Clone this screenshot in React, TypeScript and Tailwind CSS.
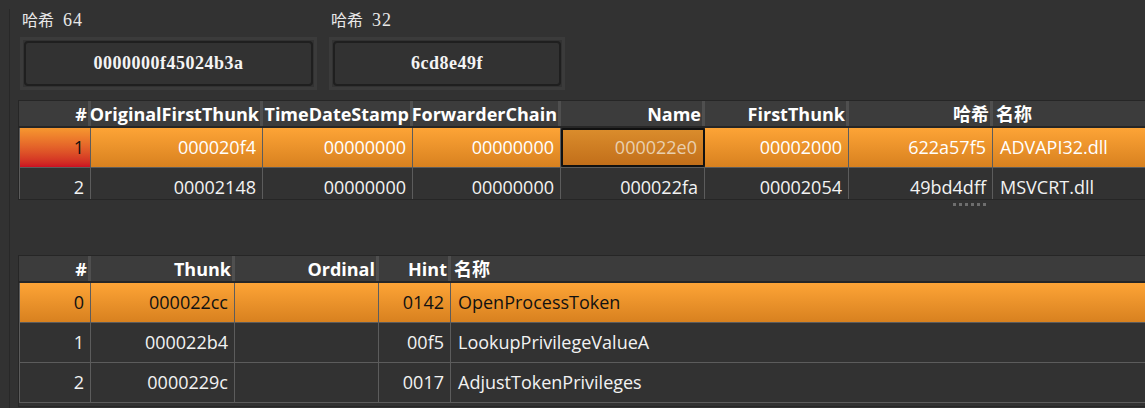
import React from "react";

type Col = { title: string; align: "right" | "left" };

const sans = "font-['Open_Sans','Noto_Sans_CJK_SC',sans-serif]";
const serif = "font-['Liberation_Serif','Noto_Sans_CJK_SC',serif]";

const importCols: Col[] = [
  { title: "#", align: "right" },
  { title: "OriginalFirstThunk", align: "right" },
  { title: "TimeDateStamp", align: "right" },
  { title: "ForwarderChain", align: "right" },
  { title: "Name", align: "right" },
  { title: "FirstThunk", align: "right" },
  { title: "哈希", align: "right" },
  { title: "名称", align: "left" },
];

const importRows = [
  ["1", "000020f4", "00000000", "00000000", "000022e0", "00002000", "622a57f5", "ADVAPI32.dll"],
  ["2", "00002148", "00000000", "00000000", "000022fa", "00002054", "49bd4dff", "MSVCRT.dll"],
];

const thunkCols: Col[] = [
  { title: "#", align: "right" },
  { title: "Thunk", align: "right" },
  { title: "Ordinal", align: "right" },
  { title: "Hint", align: "right" },
  { title: "名称", align: "left" },
];

const thunkRows = [
  ["0", "000022cc", "", "0142", "OpenProcessToken"],
  ["1", "000022b4", "", "00f5", "LookupPrivilegeValueA"],
  ["2", "0000229c", "", "0017", "AdjustTokenPrivileges"],
];

const HashBox = ({ label, bits, value, width }: { label: string; bits: string; value: string; width: string }) => (
  <div className="flex flex-col">
    <div className={`${serif} flex items-baseline text-[16px] leading-[20px] text-[#e8e8e8] pl-[2px] pt-[10px] h-[37px]`}>
      <span>{label}</span>
      <span className="ml-[9px] text-[18px] tracking-[1px]">{bits}</span>
    </div>
    <div className={`${width} h-[53px] border-[3px] border-[#3b3b3b] p-[1px]`}>
      <div className="h-full rounded-[4px] border-2 border-[#1f1f1f] flex items-center justify-center">
        <span className={`${serif} font-bold text-[18px] tracking-[0.5px] text-[#f4f4f4]`}>{value}</span>
      </div>
    </div>
  </div>
);

interface TableProps {
  cols: Col[];
  rows: string[][];
  template: string;
  bodyHeight: string;
  variant: "import" | "thunk";
}

const Table = ({ cols, rows, template, bodyHeight, variant }: TableProps) => {
  return (
    <div className={`border-l border-t border-b border-[#262626] ${sans}`}>
      {/* header */}
      <div className={`grid ${template} h-[27px] bg-[#3c3c3c] border-b-2 border-[#262626]`}>
        {cols.map((c, i) => (
          <div
            key={i}
            className={`flex items-center h-full text-[18px] font-bold text-white leading-none ${
              c.align === "right" ? "justify-end pr-[1px] border-r-[3px] border-[#4f4f4f]" : "justify-start pl-[3px]"
            }`}
          >
            {c.title}
          </div>
        ))}
      </div>
      {/* body */}
      <div className={`${bodyHeight} overflow-hidden`}>
        {rows.map((r, ri) => {
          const selected = ri === 0;
          return (
            <div key={ri} className={`grid ${template} h-[40px] border-b border-[#5c5c5c]`}>
              {r.map((v, ci) => {
                const col = cols[ci];
                let bg = "";
                let text = "text-[#f2f2f2]";
                if (selected) {
                  bg = "bg-gradient-to-b from-[#fda436] to-[#d8811f]";
                  text = variant === "thunk" ? "text-[#111]" : "text-white";
                  if (ci === 0) {
                    text = "text-[#111]";
                    if (variant === "import") bg = "bg-gradient-to-b from-[#f6972f] to-[#cc0f22]";
                  }
                }
                const focused = selected && variant === "import" && ci === 4;
                if (focused) {
                  bg = "bg-gradient-to-b from-[#da8c2c] to-[#c26f1a] border-2 border-[#111] rounded-[2px]";
                  text = "text-[#e9cfae]";
                }
                return (
                  <div
                    key={ci}
                    className={`flex items-center h-full text-[18px] whitespace-nowrap overflow-hidden ${bg} ${text} ${
                      ci === 0 ? "border-l border-[#5c5c5c]" : ""
                    } ${ci < cols.length - 1 && !focused ? "border-r border-[#5c5c5c]" : ""} ${
                      col.align === "right" ? "justify-end pr-[6px]" : "justify-start pl-[7px]"
                    }`}
                  >
                    {v}
                  </div>
                );
              })}
            </div>
          );
        })}
      </div>
    </div>
  );
};

export default function App() {
  return (
    <div className="w-[1145px] h-[408px] overflow-hidden bg-[#323232] flex">
      <div className="w-[9px] shrink-0" />
      <div className="flex-1 mt-[9px] border-l border-[#282828] pl-[8px] flex flex-col min-w-0">
        <div className="flex gap-[12px] pl-[2px] -mt-[9px]">
          <HashBox label="哈希" bits="64" value="0000000f45024b3a" width="w-[297px]" />
          <HashBox label="哈希" bits="32" value="6cd8e49f" width="w-[236px]" />
        </div>

        <div className="mt-[10px]">
          <Table
            cols={importCols}
            rows={importRows}
            template="grid-cols-[72px_172px_150px_148px_144px_144px_144px_1fr]"
            bodyHeight="h-[71px]"
            variant="import"
          />
        </div>

        {/* splitter handle */}
        <div className="h-[55px] pl-[935px] pt-[3px]">
          <div className="flex gap-[3px]">
            {[0, 1, 2, 3, 4, 5].map((i) => (
              <div key={i} className="w-[3px] h-[3px] bg-[#6e6e6e]" />
            ))}
          </div>
        </div>

        <Table
          cols={thunkCols}
          rows={thunkRows}
          template="grid-cols-[72px_144px_144px_72px_1fr]"
          bodyHeight="h-[123px]"
          variant="thunk"
        />
      </div>
    </div>
  );
}
